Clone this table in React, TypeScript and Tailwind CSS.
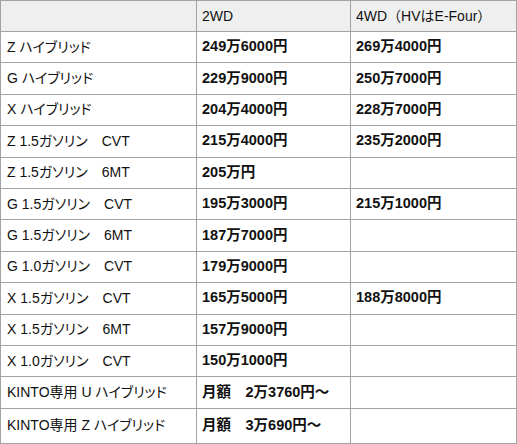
const rows: [string, string, string][] = [
  ['Z ハイブリッド', '249万6000円', '269万4000円'],
  ['G ハイブリッド', '229万9000円', '250万7000円'],
  ['X ハイブリッド', '204万4000円', '228万7000円'],
  ['Z 1.5ガソリン\u3000CVT', '215万4000円', '235万2000円'],
  ['Z 1.5ガソリン\u30006MT', '205万円', ''],
  ['G 1.5ガソリン\u3000CVT', '195万3000円', '215万1000円'],
  ['G 1.5ガソリン\u30006MT', '187万7000円', ''],
  ['G 1.0ガソリン\u3000CVT', '179万9000円', ''],
  ['X 1.5ガソリン\u3000CVT', '165万5000円', '188万8000円'],
  ['X 1.5ガソリン\u30006MT', '157万9000円', ''],
  ['X 1.0ガソリン\u3000CVT', '150万1000円', ''],
  ['KINTO専用 U ハイブリッド', '月額\u30002万3760円～', ''],
  ['KINTO専用 Z ハイブリッド', '月額\u30003万690円～', ''],
]

export default function App() {
  return (
    <div className="w-[517px] h-[444px] bg-white font-['Liberation_Sans','Noto_Sans_CJK_JP',sans-serif] text-[14px] text-[#111]">
      <table className="w-[516px] border-collapse table-fixed border border-[#a3a3a3]">
        <colgroup>
          <col className="w-[196px]" />
          <col className="w-[154px]" />
          <col className="w-[166px]" />
        </colgroup>
        <thead>
          <tr className="h-[31px] bg-[#efefef]">
            <th className="border border-[#a3a3a3]" />
            <th className="border border-[#a3a3a3] px-[5px] text-left font-normal">2WD</th>
            <th className="border border-[#a3a3a3] px-[5px] text-left font-normal">4WD（HVはE-Four）</th>
          </tr>
        </thead>
        <tbody>
          {rows.map(([name, twd, fwd], i) => (
            <tr key={name} className={i === rows.length - 1 ? 'h-[35px]' : 'h-[31.4px]'}>
              <td className="border border-[#a3a3a3] px-[6px] whitespace-nowrap [font-feature-settings:'palt']">{name}</td>
              <td className="border border-[#a3a3a3] px-[5px] text-[14.5px] font-bold whitespace-nowrap">{twd}</td>
              <td className="border border-[#a3a3a3] px-[5px] text-[14.5px] font-bold whitespace-nowrap">{fwd}</td>
            </tr>
          ))}
        </tbody>
      </table>
    </div>
  )
}
